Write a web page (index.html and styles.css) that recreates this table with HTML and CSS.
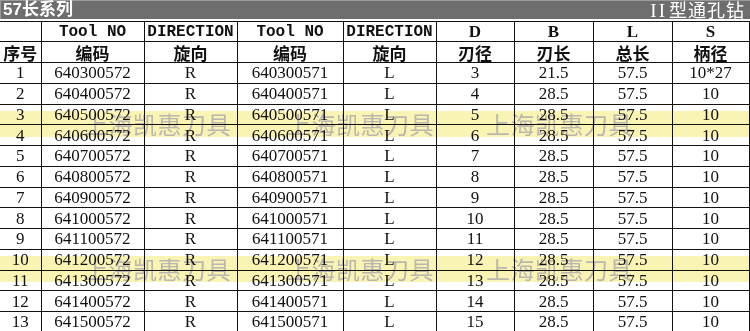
FILE: index.html
```html
<!DOCTYPE html>
<html lang="zh">
<head>
<meta charset="utf-8">
<link rel="stylesheet" href="styles.css">
</head>
<body>
<div class="page">
  <div class="titlebar">
    <span class="title-left">57长系列</span>
    <span class="title-right"><span class="roman">II</span>型通孔钻</span>
  </div>
  <table class="spec">
    <colgroup>
      <col class="c-no"><col class="c-code"><col class="c-dir"><col class="c-code2"><col class="c-dir"><col class="c-d"><col class="c-b"><col class="c-b"><col class="c-s">
    </colgroup>
    <thead>
      <tr class="h1">
        <th></th><th class="en">Tool NO</th><th class="en">DIRECTION</th><th class="en">Tool NO</th><th class="en">DIRECTION</th><th class="lt">D</th><th class="lt">B</th><th class="lt">L</th><th class="lt">S</th>
      </tr>
      <tr class="h2">
        <th>序号</th><th>编码</th><th>旋向</th><th>编码</th><th>旋向</th><th>刃径</th><th>刃长</th><th>总长</th><th>柄径</th>
      </tr>
    </thead>
    <tbody>
      <tr><td>1</td><td>640300572</td><td>R</td><td>640300571</td><td>L</td><td>3</td><td>21.5</td><td>57.5</td><td>10*27</td></tr>
      <tr><td>2</td><td>640400572</td><td>R</td><td>640400571</td><td>L</td><td>4</td><td>28.5</td><td>57.5</td><td>10</td></tr>
      <tr><td>3</td><td>640500572</td><td>R</td><td>640500571</td><td>L</td><td>5</td><td>28.5</td><td>57.5</td><td>10</td></tr>
      <tr><td>4</td><td>640600572</td><td>R</td><td>640600571</td><td>L</td><td>6</td><td>28.5</td><td>57.5</td><td>10</td></tr>
      <tr><td>5</td><td>640700572</td><td>R</td><td>640700571</td><td>L</td><td>7</td><td>28.5</td><td>57.5</td><td>10</td></tr>
      <tr><td>6</td><td>640800572</td><td>R</td><td>640800571</td><td>L</td><td>8</td><td>28.5</td><td>57.5</td><td>10</td></tr>
      <tr><td>7</td><td>640900572</td><td>R</td><td>640900571</td><td>L</td><td>9</td><td>28.5</td><td>57.5</td><td>10</td></tr>
      <tr><td>8</td><td>641000572</td><td>R</td><td>641000571</td><td>L</td><td>10</td><td>28.5</td><td>57.5</td><td>10</td></tr>
      <tr><td>9</td><td>641100572</td><td>R</td><td>641100571</td><td>L</td><td>11</td><td>28.5</td><td>57.5</td><td>10</td></tr>
      <tr><td>10</td><td>641200572</td><td>R</td><td>641200571</td><td>L</td><td>12</td><td>28.5</td><td>57.5</td><td>10</td></tr>
      <tr><td>11</td><td>641300572</td><td>R</td><td>641300571</td><td>L</td><td>13</td><td>28.5</td><td>57.5</td><td>10</td></tr>
      <tr><td>12</td><td>641400572</td><td>R</td><td>641400571</td><td>L</td><td>14</td><td>28.5</td><td>57.5</td><td>10</td></tr>
      <tr><td>13</td><td>641500572</td><td>R</td><td>641500571</td><td>L</td><td>15</td><td>28.5</td><td>57.5</td><td>10</td></tr>
    </tbody>
  </table>
  <div class="band band-a">
    <span class="wm wm1">上海凯惠刀具</span><span class="wm wm2">上海凯惠刀具</span><span class="wm wm3">上海凯惠刀具</span>
  </div>
  <div class="band band-b">
    <span class="wm wm1">上海凯惠刀具</span><span class="wm wm2">上海凯惠刀具</span><span class="wm wm3">上海凯惠刀具</span>
  </div>
</div>
</body>
</html>
```
FILE: styles.css
```css
html, body {
  margin: 0;
  padding: 0;
  background: #fff;
}
.page {
  position: relative;
  width: 750px;
  height: 331px;
  overflow: hidden;
}
.titlebar {
  height: 19px;
  margin-bottom: 2px;
  background: #6e6e6e;
  color: #fff;
  display: flex;
  align-items: center;
  justify-content: space-between;
  padding: 0 5px 0 3px;
  box-shadow: inset 1px 1px 0 #9a9a9a;
}
.title-left {
  font-family: "Liberation Sans", "Noto Sans CJK SC", sans-serif;
  font-weight: 700;
  font-size: 17px;
  line-height: 19px;
}
.title-right {
  font-family: "Noto Sans CJK SC", sans-serif;
  font-size: 18px;
  line-height: 19px;
  letter-spacing: 1px;
}
.roman {
  font-family: "Liberation Serif", serif;
  font-size: 19px;
  letter-spacing: 2px;
  margin-right: 2px;
}
.spec {
  border-collapse: collapse;
  table-layout: fixed;
  width: 749px;
  color: #111;
}
.c-no { width: 41px; }
.c-code { width: 103px; }
.c-dir { width: 93px; }
.c-code2 { width: 106px; }
.c-d { width: 78px; }
.c-b { width: 79px; }
.c-s { width: 77px; }
.spec th, .spec td {
  border: 1px solid #111;
  padding: 0;
  text-align: center;
  vertical-align: middle;
  line-height: 1;
  white-space: nowrap;
}
.spec tr > :first-child { border-left: none; }
.spec th {
  font-family: "Noto Sans CJK SC", sans-serif;
  font-weight: 700;
  font-size: 17px;
}
.spec th.en {
  font-family: "Liberation Mono", monospace;
  font-size: 16px;
}
.spec th.lt {
  font-family: "Liberation Serif", serif;
  font-size: 17px;
}
.h1 { height: 20px; }
.h2 { height: 21px; }
.spec td {
  font-family: "Liberation Serif", serif;
  font-size: 17px;
}
.spec tbody tr { height: 20.75px; }
.band {
  position: absolute;
  left: 0;
  width: 750px;
  height: 26px;
  background: #f9f3b4;
  mix-blend-mode: multiply;
}
.band-a { top: 111px; }
.band-b { top: 256px; }
.wm {
  position: absolute;
  top: -1px;
  font-family: "Noto Sans CJK SC", serif;
  font-size: 24px;
  line-height: 28px;
  letter-spacing: 0.5px;
  color: #bab7b0;
}
.wm1 { left: 84px; }
.wm2 { left: 287px; }
.wm3 { left: 486px; }
```
